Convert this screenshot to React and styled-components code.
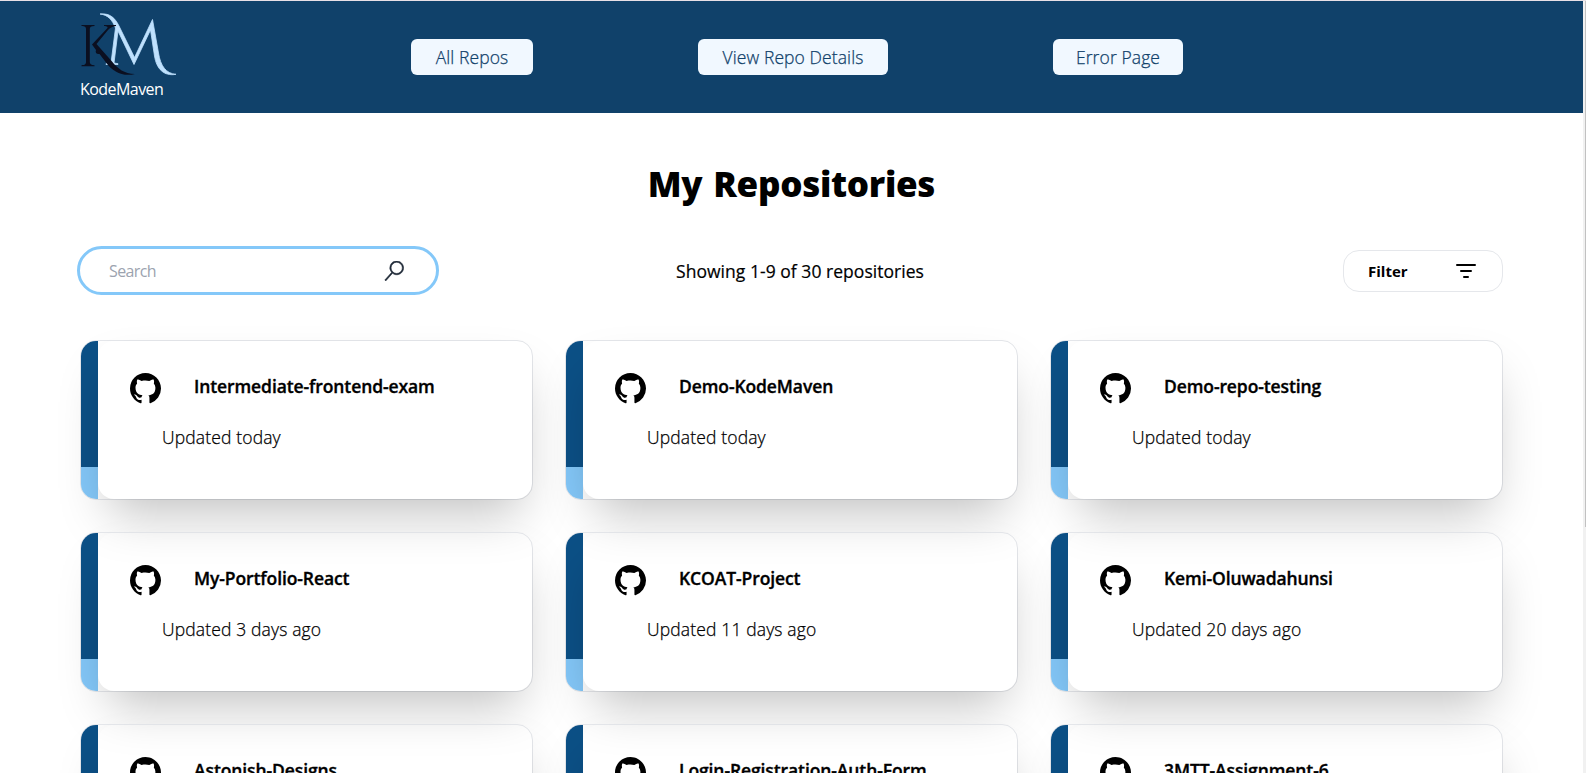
import styled, { createGlobalStyle } from "styled-components";
import { VscGithubInverted, VscSearch } from "react-icons/vsc";

const GlobalStyle = createGlobalStyle`
  * {
    box-sizing: border-box;
    margin: 0;
    padding: 0;
  }

  html,
  body {
    height: 773px;
    overflow: hidden;
  }

  body {
    font-family: "Open Sans", "Noto Sans", sans-serif;
    font-size: 16px;
    line-height: 24px;
    color: #000;
    background: #fff;
  }
`;

const Page = styled.div`
  display: flex;
  height: 773px;
  border-top: 1px solid #e8e0e6;
  overflow: hidden;
`;

const Content = styled.div`
  width: 1583px;
`;

const ScrollTrack = styled.div`
  width: 3px;
  background: #f1f1f1;
`;

const ScrollThumb = styled.div`
  height: 526px;
  margin-left: 2px;
  background: #c1c1c1;
`;

const Header = styled.header`
  display: flex;
  height: 112px;
  padding: 12px 80px 0;
  background: #10416a;
`;

const Brand = styled.div`
  width: 331px;
  color: #fff;
  letter-spacing: -0.55px;

  & svg {
    display: block;
  }
`;

const Nav = styled.nav`
  display: flex;
  gap: 165px;
  padding-top: 26px;
`;

const NavButton = styled.button`
  width: ${(props) => props.$width}px;
  height: 36px;
  border: 0;
  border-radius: 6px;
  background: #f1f8ff;
  color: #10416a;
  font-family: inherit;
  font-size: 17.5px;
  font-weight: 300;
  letter-spacing: 0.1px;
  white-space: nowrap;
  -webkit-text-stroke: 0.25px #10416a;
`;

const Main = styled.main`
  padding: 48px 80px 0;
`;

const Title = styled.h1`
  font-size: 35px;
  font-weight: 800;
  line-height: 45px;
  letter-spacing: -0.3px;
  word-spacing: 2px;
  text-align: center;
`;

const Toolbar = styled.div`
  display: flex;
  align-items: center;
  height: 49px;
  margin: 40px 0 45px -3px;
`;

const SearchBox = styled.div`
  display: flex;
  align-items: center;
  justify-content: space-between;
  width: 362px;
  height: 49px;
  padding: 0 32px 0 29px;
  border: 3px solid #84c8f9;
  border-radius: 25px;
  color: #1f2937;

  & svg {
    stroke: #1f2937;
    stroke-width: 0.7;
  }
`;

const SearchInput = styled.input`
  width: 200px;
  border: 0;
  outline: 0;
  background: transparent;
  font-family: inherit;
  font-size: 16px;
  letter-spacing: -0.6px;

  &::placeholder {
    color: #9ca3af;
  }
`;

const Showing = styled.p`
  margin-left: 237px;
  font-size: 17.5px;
  letter-spacing: 0.04px;
  -webkit-text-stroke: 0.2px #000;
`;

const FilterButton = styled.button`
  display: flex;
  align-items: center;
  justify-content: space-between;
  width: 160px;
  height: 42px;
  margin-left: auto;
  padding: 0 26px 0 24px;
  border: 1px solid #e5e7eb;
  border-radius: 16px;
  background: #fff;
  color: #000;
  font-family: inherit;
  font-size: 15px;
  font-weight: 700;
`;

const Grid = styled.div`
  display: grid;
  grid-template-columns: repeat(3, 453px);
  grid-auto-rows: 160px;
  gap: 32px;
`;

const Card = styled.article`
  display: flex;
  border: 1px solid #e5e7eb;
  border-radius: 16px;
`;

const Stripe = styled.div`
  flex: none;
  width: 17px;
  border-radius: 15px 0 0 15px;
  background: linear-gradient(#0c5086 126px, #84c8f9 126px);
`;

const CardBody = styled.div`
  flex: 1;
  padding: 31px 0 0 32px;
  border-radius: 16px;
  box-shadow: 0 25px 50px -12px rgba(0, 0, 0, 0.25);
`;

const RepoHead = styled.div`
  display: flex;
  gap: 33px;
  height: 32px;

  & svg {
    margin-top: 1px;
  }
`;

const RepoName = styled.h2`
  font-size: 17.5px;
  font-weight: 600;
  line-height: 28px;
  letter-spacing: -0.1px;
  -webkit-text-stroke: 0.35px #000;
`;

const Updated = styled.p`
  margin: 19px 0 0 32px;
  font-size: 17.5px;
  font-weight: 300;
  line-height: 28px;
  letter-spacing: 0.14px;
  -webkit-text-stroke: 0.25px #000;
`;

const repos = [
  { name: "Intermediate-frontend-exam", updated: "today" },
  { name: "Demo-KodeMaven", updated: "today" },
  { name: "Demo-repo-testing", updated: "today" },
  { name: "My-Portfolio-React", updated: "3 days ago" },
  { name: "KCOAT-Project", updated: "11 days ago" },
  { name: "Kemi-Oluwadahunsi", updated: "20 days ago" },
  { name: "Astonish-Designs", updated: "21 days ago" },
  { name: "Login-Registration-Auth-Form", updated: "22 days ago" },
  { name: "3MTT-Assignment-6", updated: "24 days ago" },
];

const Logo = () => (
  <svg width="98" height="64" viewBox="0 0 98 64">
    <path
      fill="#bfe1fe"
      stroke="#bfe1fe"
      strokeWidth="0.8"
      d="M20 1C30 0 35 5 39 13L54.500 44.500L72.500 6.500L78.500 40C80.500 53 86 60.500 96 61.300C84 63.500 76.500 56 74.500 43L70.500 17L54 51.500L38 18L34 50L38 50.700V51.500H26V50.700L31 50L35.500 15C32 6.500 28 2 20 1Z"
    />
    <g fill="#0b0f20">
      <path d="M1.500 12H14.500V13C11 13.200 9.800 14 9.800 16V49C9.800 51 11 52 14.500 52.200V53.200H1.500V52.200C5 52 6 51 6 49V16C6 14 5 13.200 1.500 13Z" />
      <path d="M24 12H36V13C32 13.500 30 15 28 17L16.500 31L32 48.500C38 56 44 60.500 55 61C43 64 33 59 26 49.500L19.500 41C16.500 41.500 15 39.500 16 37L12 31.500L27 15.500C28.500 13.800 27 13.200 24 13Z" />
    </g>
  </svg>
);

const FilterIcon = () => (
  <svg width="20" height="16" viewBox="0 0 20 16" stroke="#000" strokeWidth="2" strokeLinecap="round">
    <path d="M1 2H19M5 8H15M8 14H12" />
  </svg>
);

const App = () => {
  return (
    <>
      <GlobalStyle />
      <Page>
        <Content>
          <Header>
            <Brand>
              <Logo />
              KodeMaven
            </Brand>
            <Nav>
              <NavButton $width={122}>All Repos</NavButton>
              <NavButton $width={190}>View Repo Details</NavButton>
              <NavButton $width={130}>Error Page</NavButton>
            </Nav>
          </Header>
          <Main>
            <Title>My Repositories</Title>
            <Toolbar>
              <SearchBox>
                <SearchInput placeholder="Search" />
                <VscSearch size={20} />
              </SearchBox>
              <Showing>Showing 1-9 of 30 repositories</Showing>
              <FilterButton>
                Filter
                <FilterIcon />
              </FilterButton>
            </Toolbar>
            <Grid>
              {repos.map((repo) => (
                <Card key={repo.name}>
                  <Stripe />
                  <CardBody>
                    <RepoHead>
                      <VscGithubInverted size={31} />
                      <RepoName>{repo.name}</RepoName>
                    </RepoHead>
                    <Updated>Updated {repo.updated}</Updated>
                  </CardBody>
                </Card>
              ))}
            </Grid>
          </Main>
        </Content>
        <ScrollTrack>
          <ScrollThumb />
        </ScrollTrack>
      </Page>
    </>
  );
};

export default App;
